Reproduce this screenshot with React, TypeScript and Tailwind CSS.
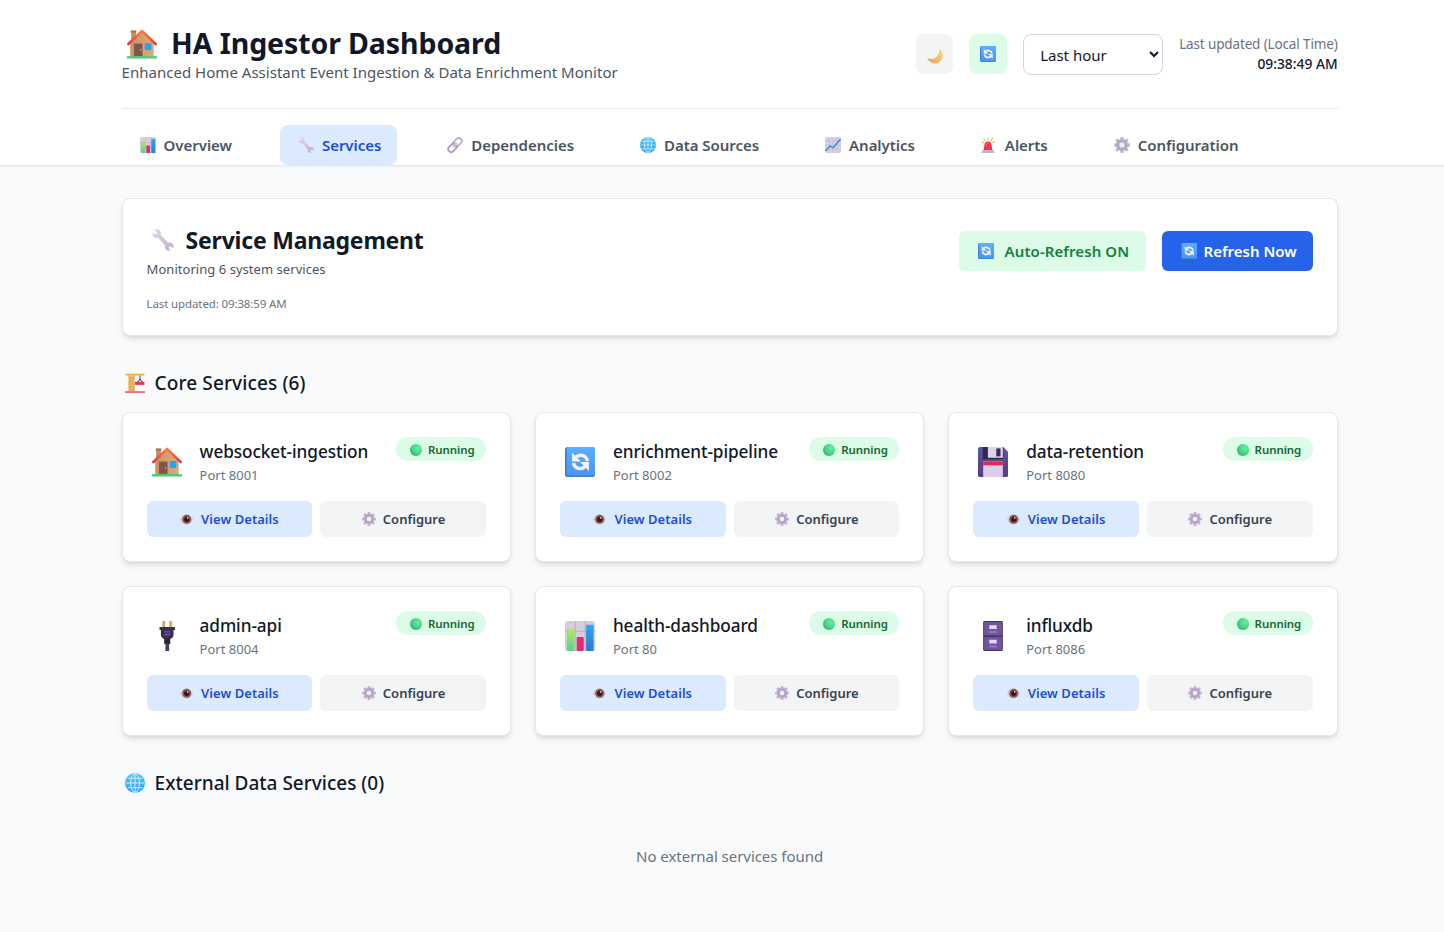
import React from "react";

type IconProps = { className?: string };

const Svg = ({ className = "", children }: { className?: string; children: React.ReactNode }) => (
  <svg viewBox="0 0 32 32" className={`block shrink-0 ${className}`} aria-hidden="true">{children}</svg>
);

const House = ({ className }: IconProps) => (
  <Svg className={className}>
    <defs>
      <linearGradient id="houseWall" x1="0" y1="0" x2="1" y2="0"><stop stopColor="#c9935f" /><stop offset="1" stopColor="#e0ab7b" /></linearGradient>
      <linearGradient id="houseRoof" x1="0" y1="0" x2="0" y2="1"><stop stopColor="#ff8048" /><stop offset="1" stopColor="#dd3b45" /></linearGradient>
    </defs>
    <path d="M4.500 2h5v10h-5z" fill="#c08f62" />
    <path d="M4 1.500h6V4H4z" fill="#a8794f" />
    <path d="M16 3 28.500 15v15h-25V15z" fill="url(#houseWall)" />
    <path d="M1.500 16 16 2l14.500 14" fill="none" stroke="url(#houseRoof)" strokeWidth="2.800" strokeLinecap="round" strokeLinejoin="round" />
    <path d="M7.500 15.500h9V29h-9z" fill="#7d564d" /><circle cx="14.500" cy="22" r=".8" fill="#e8b56a" />
    <path d="M19 15h7v7.500h-7z" fill="#22a7f2" />
    <path d="M0 29h32v2.500H0z" fill="#3fd07a" />
  </Svg>
);
const Bars = ({ className }: IconProps) => (
  <Svg className={className}>
    <rect width="32" height="32" rx="3" fill="#d6cede" />
    <path d="M0 11h32M0 21.500h32M11 0v32M21.500 0v32" stroke="#b9adc6" strokeWidth="1" />
    <linearGradient id="barG" x1="0" y1="0" x2="0" y2="1"><stop stopColor="#b5e65a" /><stop offset="1" stopColor="#52d88c" /></linearGradient>
    <linearGradient id="barB" x1="0" y1="0" x2="0" y2="1"><stop stopColor="#31a6fa" /><stop offset="1" stopColor="#2f78cf" /></linearGradient>
    <rect x="2" y="8" width="8" height="24" rx="1" fill="url(#barG)" />
    <rect x="12.500" y="17" width="7.500" height="15" rx="1" fill="#e62a72" />
    <rect x="22.500" y="4" width="8" height="28" rx="1" fill="url(#barB)" />
  </Svg>
);
const Wrench = ({ className }: IconProps) => (
  <Svg className={className}>
    <linearGradient id="wr" x1="0" y1="0" x2="1" y2="1"><stop stopColor="#dcd7e4" /><stop offset=".5" stopColor="#d3c3e2" /><stop offset="1" stopColor="#b9aac5" /></linearGradient>
    <path d="M4 1 7.500.500c4 0 6.500 4 5 8L23.500 20c4-1 7.500 1.500 8 5.500l-.5 2-4.500-2.500-2.500 2 2.500 4-2 .7c-4 0-6.500-3.700-5.500-7.700L8.500 12.500C4.500 14 1 11.500.500 7.500L1 5.500 5 8l2.500-2.300z" fill="url(#wr)" />
  </Svg>
);
const LinkIcon = ({ className }: IconProps) => (
  <Svg className={className}>
    <g fill="none" strokeWidth="4" strokeLinecap="round">
      <rect x="11.500" y="4.500" width="19" height="12" rx="6" transform="rotate(-45 21 10.500)" stroke="#bfb2ca" />
      <rect x="1.500" y="15.500" width="19" height="12" rx="6" transform="rotate(-45 11 21.500)" stroke="#b0a2bc" />
      <path d="m13 19 6-6" stroke="#d1c6da" />
    </g>
  </Svg>
);
const Globe = ({ className }: IconProps) => (
  <Svg className={className}>
    <linearGradient id="gl" x1="0" y1="0" x2="0" y2="1"><stop stopColor="#4cc6ff" /><stop offset="1" stopColor="#30a6ec" /></linearGradient>
    <circle cx="16" cy="16" r="16" fill="url(#gl)" />
    <g fill="none" stroke="#d9f2ff" strokeWidth="1.500">
      <ellipse cx="16" cy="16" rx="7" ry="15" /><path d="M16 1v30M1.500 16h29M4.500 8.500h23M4.500 23.500h23" />
    </g>
  </Svg>
);
const Trend = ({ className }: IconProps) => (
  <Svg className={className}>
    <rect width="32" height="32" rx="3" fill="#d9cfe3" />
    <path d="M0 8h32M0 16h32M0 24h32M8 0v32M16 0v32M24 0v32" stroke="#bfb2cf" strokeWidth="1" />
    <path d="m1.500 27 8.500-9 6 3.500L30.500 5" fill="none" stroke="#2d8fdc" strokeWidth="2.800" strokeLinecap="round" strokeLinejoin="round" />
  </Svg>
);
const Siren = ({ className }: IconProps) => (
  <Svg className={className}>
    <path d="M14 1.500V6M5.500 3l3 4.500M23 2l-2.500 5M2.500 9l3 2.500M26.500 9l-3 2" stroke="#f9c23c" strokeWidth="2.200" strokeLinecap="round" />
    <path d="M5 27 7 15c.6-4 3-6 7-6s6.400 2 7 6l2 12z" fill="#f5354f" />
    <path d="M10.500 17c.3-3 1.500-4.500 4-4.500" stroke="#ff8795" strokeWidth="2" fill="none" />
    <path d="M3 26h22l2 6H1z" fill="#c3b1d3" />
  </Svg>
);
const Gear = ({ className }: IconProps) => (
  <Svg className={className}>
    <g fill="#c3b6d1">
      {[0, 45, 90, 135].map((a) => <rect key={a} x="12.500" y="0" width="7" height="32" rx="2" transform={`rotate(${a} 16 16)`} />)}
    </g>
    <circle cx="16" cy="16" r="8.500" fill="none" stroke="#b3a5c3" strokeWidth="6" />
    <circle cx="16" cy="16" r="5.200" fill="#f1eef5" />
  </Svg>
);
const Moon = ({ className }: IconProps) => (
  <Svg className={className}>
    <linearGradient id="mn" x1="1" y1="0" x2="0" y2="1"><stop stopColor="#ffdb80" /><stop offset="1" stopColor="#ee9f4f" /></linearGradient>
    <path d="M25 1c7 7 9 18 2 25C19 34 6 32 0 20c6 3 13 3 18-1.500S25 8 25 1z" fill="url(#mn)" />
  </Svg>
);
const Sync = ({ className }: IconProps) => (
  <Svg className={className}>
    <linearGradient id="sy" x1="0" y1="0" x2="0" y2="1"><stop stopColor="#56b0ff" /><stop offset="1" stopColor="#4a95f0" /></linearGradient>
    <rect width="32" height="32" rx="3" fill="#3c7fd0" />
    <rect x="1.800" width="30.200" height="30.500" rx="2.500" fill="url(#sy)" />
    <g fill="none" stroke="#f5f0fb" strokeWidth="3.600">
      <path d="M11 11.200c5-4.500 11.500-2.500 13 3.800" /><path d="M22 20.500c-5 4.500-12 2.500-13-3.500" />
    </g>
    <path d="M7.500 6v9.500H17zM25.500 25.500V16H16z" fill="#f5f0fb" />
  </Svg>
);
const Crane = ({ className }: IconProps) => (
  <Svg className={className}>
    <path d="M1 1h30v3H1z" fill="#f2b43a" />
    <path d="M6 3h9v27H6z" fill="#f5cd8e" />
    <path d="M6.500 3v27M14.500 3v27M7 5l7 5-7 5 7 5-7 5 7 5M14 5l-7 5 7 5-7 5 7 5-7 5" fill="none" stroke="#dd9a45" strokeWidth="1.500" />
    <path d="M24 4v6m0 0-6 7m6-7 6 7" fill="none" stroke="#594b68" strokeWidth="1.800" />
    <path d="M16 14h15v5H16z" fill="#e03b50" />
    <path d="M0 29h32v3H0z" fill="#f9677e" />
  </Svg>
);
const Floppy = ({ className }: IconProps) => (
  <Svg className={className}>
    <linearGradient id="fl" x1="0" y1="0" x2="0" y2="1"><stop stopColor="#565aa2" /><stop offset="1" stopColor="#5c3b80" /></linearGradient>
    <path d="M2 0h25l5 5v25a2 2 0 0 1-2 2H2a2 2 0 0 1-2-2V2a2 2 0 0 1 2-2z" fill="url(#fl)" />
    <path d="M5 0h22v13H5z" fill="#32264f" /><path d="M10.500 0h16v11.500h-16z" fill="#ded4e6" /><path d="M19.500 1.500H24v8.500h-4.500z" fill="#3a2860" />
    <path d="M5.500 15.500h21V32h-21z" fill="#dccdea" /><path d="M5.500 15.500h21v4h-21z" fill="#e8264f" />
  </Svg>
);
const Plug = ({ className }: IconProps) => (
  <Svg className={className}>
    <path d="M11 0h3v8h-3zM18.500 0h3v8h-3z" fill="#d9a068" />
    <path d="M9 6.500h14.500c.8 0 1 .5 1 1v2H23v5c0 2.500-1.500 4.500-4 5h-5.500c-2.500-.5-4-2.500-4-5v-5H8v-2c0-.5.300-1 1-1z" fill="#3a3144" />
    <path d="M13 11.500h6.500M13 14.500h6.500" stroke="#7a4fd0" strokeWidth="1.300" />
    <path d="M13 19h6.500v5.500H13z" fill="#2b2333" /><path d="M14.300 24h4V32h-4z" fill="#4a4154" />
  </Svg>
);
const Cabinet = ({ className }: IconProps) => (
  <Svg className={className}>
    <rect x="5.500" width="21" height="32" rx="1.500" fill="#46305f" />
    <path d="M6.500 1h19v14.500h-19zM6.500 17h19v14h-19z" fill="#6f559f" />
    <path d="M12 4.500h8v4h-8zM12 20h8v4h-8z" fill="#e2d8ef" />
    <path d="M12 11.800h8M12 27.300h8" stroke="#a07be0" strokeWidth="1.600" />
  </Svg>
);
const Eye = ({ className }: IconProps) => (
  <Svg className={className}>
    <path d="M0 16C3 7 9 3.500 16 3.500S29 7 32 16c-3 9-9 12.500-16 12.500S3 25 0 16z" fill="#d6cad3" />
    <circle cx="16.500" cy="15.500" r="11" fill="#87554b" /><circle cx="16.500" cy="15.500" r="6.500" fill="#35151f" /><circle cx="19" cy="12" r="2.200" fill="#d8c8ca" />
  </Svg>
);
const Dot = ({ className }: IconProps) => (
  <Svg className={className}>
    <radialGradient id="dt" cx=".65" cy=".35" r=".75"><stop stopColor="#62f29a" /><stop offset=".6" stopColor="#45d388" /><stop offset="1" stopColor="#3f9c7c" /></radialGradient>
    <circle cx="16" cy="16" r="16" fill="url(#dt)" />
  </Svg>
);

const Text = ({ children, className = "" }: { children: string; className?: string }) => (
  <span className={`whitespace-nowrap ${className}`}>{children}</span>
);

const tabs = [
  { label: "Overview", Icon: Bars },
  { label: "Services", Icon: Wrench },
  { label: "Dependencies", Icon: LinkIcon },
  { label: "Data Sources", Icon: Globe },
  { label: "Analytics", Icon: Trend },
  { label: "Alerts", Icon: Siren },
  { label: "Configuration", Icon: Gear },
];
const services = [
  { name: "websocket-ingestion", port: 8001, Icon: House },
  { name: "enrichment-pipeline", port: 8002, Icon: Sync },
  { name: "data-retention", port: 8080, Icon: Floppy },
  { name: "admin-api", port: 8004, Icon: Plug },
  { name: "health-dashboard", port: 80, Icon: Bars },
  { name: "influxdb", port: 8086, Icon: Cabinet },
];

export default function App() {
  return (
    <div className="h-[932px] w-full overflow-hidden bg-[#f9fafb] font-['Noto_Sans',sans-serif] text-[#111827]">
      <header className="h-[166px] border-b border-gray-200 bg-white shadow-xs">
        <div className="ml-[121.6px] w-[1216px]">
          <div className="flex h-[109px] items-center justify-between border-b border-gray-200">
            <div>
              <h1 className="flex h-9 items-center gap-[14.500px] pl-[5px]">
                <House className="mt-[3px] size-[30px]" />
                <Text className="pt-0.5 text-[28.5px] font-bold tracking-[-0.1px]">HA Ingestor Dashboard</Text>
              </h1>
              <p className="flex h-6 items-center text-[#4b5563]"><Text className="text-[15px] tracking-[0.02px]">Enhanced Home Assistant Event Ingestion &amp; Data Enrichment Monitor</Text></p>
            </div>
            <div className="flex items-center gap-4">
              <button className="flex h-10 w-[37px] items-center justify-center rounded-lg bg-[#f3f4f6]"><Moon className="mt-[3px] size-4" /></button>
              <button className="flex h-10 w-[38px] items-center justify-center rounded-lg bg-[#dcfce7]"><Sync className="size-4" /></button>
              <select className="h-[41px] w-[140px] rounded-lg border border-[#d1d5db] bg-white px-3 pt-px text-[15px]"><option>Last hour</option></select>
              <div className="flex flex-col items-end leading-5">
                <Text className="text-[13.5px] tracking-[-0.14px] text-[#6b7280]">Last updated (Local Time)</Text>
                <Text className="text-[13.800px] font-medium">09:38:49 AM</Text>
              </div>
            </div>
          </div>
          <nav className="flex gap-8 pt-4">
            {tabs.map(({ label, Icon }, i) => (
              <button key={label} className={i === 1 ? "flex h-10 items-center gap-2 rounded-lg bg-[#dbeafe] pr-4 pl-[18px] text-[#1d4ed8]" : "flex h-10 items-center gap-2 rounded-lg pr-4 pl-[18px] text-[#4b5563]"}>
                <Icon className="size-4" />
                <Text className="text-[15px] font-semibold tracking-[-0.04px]">{label}</Text>
              </button>
            ))}
          </nav>
        </div>
      </header>
      <main className="ml-[121.6px] w-[1216px] pt-8">
        <section className="mb-8 flex h-[138px] items-start justify-between rounded-lg border border-gray-200 bg-white p-6 shadow-md">
          <div>
            <h2 className="flex h-8 items-center gap-3 pl-[5px]"><Wrench className="mt-px size-[22px]" /><Text className="pt-0.5 text-[23px] font-bold tracking-[-0.21px]">Service Management</Text></h2>
            <p className="mt-1 flex h-5 items-center text-[#4b5563]"><Text className="pt-px text-[13px] tracking-[0.04px]">Monitoring 6 system services</Text></p>
            <p className="mt-4 flex h-4 items-center text-[#6b7280]"><Text className="pt-px text-[11.5px] tracking-[-0.12px]">Last updated: 09:38:59 AM</Text></p>
          </div>
          <div className="mt-2 flex gap-4">
            <button className="flex h-10 w-[187px] items-center gap-[11px] rounded-md bg-[#dcfce7] pl-[19px] text-[#15803d]"><Sync className="size-4" /><Text className="text-[15px] font-semibold tracking-[0.08px]">Auto-Refresh ON</Text></button>
            <button className="flex h-10 w-[151px] items-center gap-[7px] rounded-md bg-[#2563eb] pl-[19px] text-white"><Sync className="size-4" /><Text className="text-[15px] font-semibold">Refresh Now</Text></button>
          </div>
        </section>
        <h3 className="mb-4 flex h-7 items-center gap-[10px] pl-[3px]"><Crane className="mt-px size-5" /><Text className="pt-0.5 text-[19px] font-medium tracking-[0.12px]">Core Services (6)</Text></h3>
        <div className="mb-8 grid grid-cols-3 gap-6">
          {services.map(({ name, port, Icon }) => (
            <article key={name} className="h-[150px] rounded-lg border border-gray-200 bg-white p-6 shadow-md">
              <div className="flex h-16 items-start">
                <Icon className="mt-[10px] ml-[5px] size-[30px]" />
                <div className="ml-[18px] flex flex-1 flex-col">
                  <span className="flex h-7 items-center"><Text className="pt-0.5 text-[17.200px] font-medium tracking-[-0.08px]">{name}</Text></span>
                  <span className="flex h-5 items-center text-[#6b7280]"><Text className="pt-0.5 text-[13px]">{`Port ${port}`}</Text></span>
                </div>
                <span className="flex h-6 w-[90px] items-center gap-1.5 rounded-full bg-[#dcfce7] pl-[14px] text-[#166534]"><Dot className="mt-px size-3" /><Text className="pt-px text-[11.500px] font-semibold tracking-[-0.08px]">Running</Text></span>
              </div>
              <div className="grid grid-cols-2 gap-2">
                <button className="flex h-9 items-center justify-center gap-2 rounded-md bg-[#dbeafe] text-[#1d4ed8]"><Eye className="size-[13px]" /><Text className="pt-px text-[13px] font-semibold tracking-[0.04px]">View Details</Text></button>
                <button className="flex h-9 items-center justify-center gap-[7px] rounded-md bg-[#f3f4f6] pl-px text-[#374151]"><Gear className="size-[14px]" /><Text className="pt-px text-[13px] font-semibold">Configure</Text></button>
              </div>
            </article>
          ))}
        </div>
        <h3 className="mb-4 flex h-7 items-center gap-[10px] pl-[3px]"><Globe className="mt-px size-5" /><Text className="pt-0.5 text-[19px] font-medium">External Data Services (0)</Text></h3>
        <p className="py-8 text-center text-[#6b7280]"><Text className="text-[15px] tracking-[-0.04px]">No external services found</Text></p>
      </main>
    </div>
  );
}
